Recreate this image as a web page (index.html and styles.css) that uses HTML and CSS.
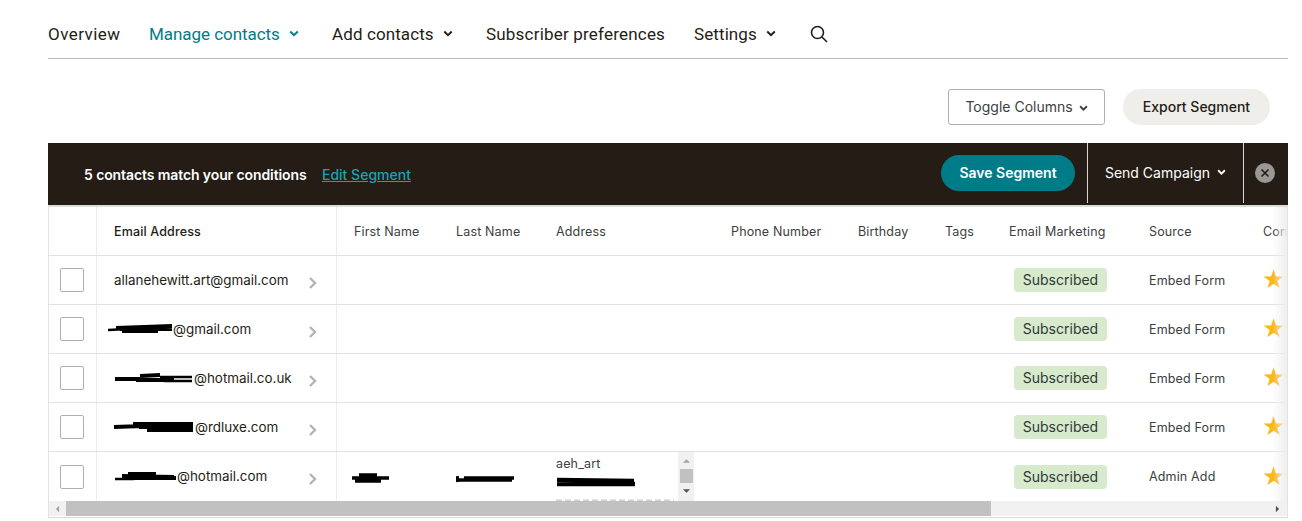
FILE: index.html
```html
<!DOCTYPE html>
<html lang="en">

<head>
    <meta charset="UTF-8">
    <title>Segment</title>
    <link rel="stylesheet" href="styles.css">
</head>

<body>
    <nav class="nav">
        <a class="nav-item overview">Overview</a>
        <a class="nav-item manage active">Manage contacts <svg class="nav-caret" viewBox="0 0 8 6"><path d="M1 1l3 3 3-3"/></svg></a>
        <a class="nav-item add">Add contacts <svg class="nav-caret" viewBox="0 0 8 6"><path d="M1 1l3 3 3-3"/></svg></a>
        <a class="nav-item prefs">Subscriber preferences</a>
        <a class="nav-item settings">Settings <svg class="nav-caret" viewBox="0 0 8 6"><path d="M1 1l3 3 3-3"/></svg></a>
        <svg class="nav-search" viewBox="0 0 18 18"><circle cx="7.5" cy="7.5" r="6"/><path d="M12 12l5 5"/></svg>
    </nav>

    <div class="toolbar">
        <button class="btn-toggle">Toggle Columns <svg class="caret" viewBox="0 0 8 6"><path d="M1 1l3 3 3-3"/></svg></button>
        <button class="btn-export">Export Segment</button>
    </div>

    <div class="segment-bar">
        <span class="match">5 contacts match your conditions</span>
        <a class="edit">Edit Segment</a>
        <button class="btn-save">Save Segment</button>
        <div class="send">Send Campaign <svg class="caret" viewBox="0 0 8 6"><path d="M1 1l3 3 3-3"/></svg></div>
        <div class="close"><svg viewBox="0 0 10 10"><path d="M1.5 1.5l7 7M8.5 1.5l-7 7"/></svg></div>
    </div>

    <div class="table">
        <div class="row head">
            <div class="cell c-check"></div>
            <div class="cell c-email">Email Address</div>
            <div class="cell">First Name</div>
            <div class="cell">Last Name</div>
            <div class="cell">Address</div>
            <div class="cell">Phone Number</div>
            <div class="cell">Birthday</div>
            <div class="cell">Tags</div>
            <div class="cell">Email Marketing</div>
            <div class="cell">Source</div>
            <div class="cell">Contact Rating</div>
        </div>

        <div class="row">
            <div class="cell c-check"><span class="box"></span></div>
            <div class="cell c-email"><span class="mail">allanehewitt.art@gmail.com</span><svg class="go" viewBox="0 0 9 14"><path d="M2 2l5 5-5 5"/></svg></div>
            <div class="cell"></div><div class="cell"></div><div class="cell"></div><div class="cell"></div><div class="cell"></div><div class="cell"></div>
            <div class="cell"><span class="badge">Subscribed</span></div>
            <div class="cell">Embed Form</div>
            <div class="cell"><span class="stars">★★</span></div>
        </div>

        <div class="row">
            <div class="cell c-check"><span class="box"></span></div>
            <div class="cell c-email"><span class="mail pull"><svg class="ink" width="65" height="12" viewBox="0 0 65 12"><path class="thin" d="M0 7L20 6"/><path d="M8 5L64 3M12 6L64 6M14 8L50 8"/></svg>@gmail.com</span><svg class="go" viewBox="0 0 9 14"><path d="M2 2l5 5-5 5"/></svg></div>
            <div class="cell"></div><div class="cell"></div><div class="cell"></div><div class="cell"></div><div class="cell"></div><div class="cell"></div>
            <div class="cell"><span class="badge">Subscribed</span></div>
            <div class="cell">Embed Form</div>
            <div class="cell"><span class="stars">★★</span></div>
        </div>

        <div class="row">
            <div class="cell c-check"><span class="box"></span></div>
            <div class="cell c-email"><span class="mail"><svg class="ink" width="80" height="12" viewBox="0 0 80 12"><path d="M1 7L26 7M26 4L46 3M22 8L60 8"/><path class="thin" d="M46 5L78 5M50 9L78 9"/></svg>@hotmail.co.uk</span><svg class="go" viewBox="0 0 9 14"><path d="M2 2l5 5-5 5"/></svg></div>
            <div class="cell"></div><div class="cell"></div><div class="cell"></div><div class="cell"></div><div class="cell"></div><div class="cell"></div>
            <div class="cell"><span class="badge">Subscribed</span></div>
            <div class="cell">Embed Form</div>
            <div class="cell"><span class="stars">★★</span></div>
        </div>

        <div class="row">
            <div class="cell c-check"><span class="box"></span></div>
            <div class="cell c-email"><span class="mail pull-s"><svg class="ink" width="82" height="12" viewBox="0 0 82 12"><path d="M1 6L30 5M20 3L80 3M26 6L80 6M34 9L80 9"/></svg>@rdluxe.com</span><svg class="go" viewBox="0 0 9 14"><path d="M2 2l5 5-5 5"/></svg></div>
            <div class="cell"></div><div class="cell"></div><div class="cell"></div><div class="cell"></div><div class="cell"></div><div class="cell"></div>
            <div class="cell"><span class="badge">Subscribed</span></div>
            <div class="cell">Embed Form</div>
            <div class="cell"><span class="stars">★★</span></div>
        </div>

        <div class="row last">
            <div class="cell c-check"><span class="box"></span></div>
            <div class="cell c-email"><span class="mail"><svg class="ink" width="63" height="12" viewBox="0 0 63 12"><path class="thin" d="M1 9L20 9"/><path d="M8 6L60 7M14 4L42 4M12 8L62 8"/></svg>@hotmail.com</span><svg class="go" viewBox="0 0 9 14"><path d="M2 2l5 5-5 5"/></svg></div>
            <div class="cell"><svg class="ink-name first" width="40" height="12" viewBox="0 0 40 12"><path d="M1 6L38 6M8 3L26 3M4 9L30 9"/></svg></div>
            <div class="cell"><svg class="ink-name" width="59" height="12" viewBox="0 0 59 12"><path d="M1 4L2 10M2 8L56 8M8 6L58 6"/></svg></div>
            <div class="cell c-address">
                <div class="address-box">
                    <div class="address-text">
                        <div>aeh_art</div>
                        <svg class="ink-address" width="80" height="12" viewBox="0 0 80 12"><path d="M1 3L78 4M1 7L79 7"/></svg>
                        <svg class="address-cut" width="118" height="3" viewBox="0 0 118 3"><path d="M0 1.5H118"/></svg>
                    </div>
                    <div class="address-scroll">
                        <svg class="arrow" viewBox="0 0 10 6"><path class="up-off" d="M5 1l4 4H1z"/></svg>
                        <span class="address-thumb"></span>
                        <svg class="arrow down" viewBox="0 0 10 6"><path d="M1 1h8L5 5z"/></svg>
                    </div>
                </div>
            </div>
            <div class="cell"></div><div class="cell"></div><div class="cell"></div>
            <div class="cell"><span class="badge">Subscribed</span></div>
            <div class="cell">Admin Add</div>
            <div class="cell"><span class="stars">★★</span></div>
        </div>

        <div class="scrollbar">
            <svg class="sb-arrow" viewBox="0 0 6 10"><path d="M5 1v8L1 5z"/></svg>
            <span class="sb-thumb"></span>
            <svg class="sb-arrow right" viewBox="0 0 6 10"><path d="M1 1v8l4-4z"/></svg>
        </div>
        <div class="fade"></div>
    </div>
</body>

</html>
```

FILE: styles.css
```css
* {
    box-sizing: border-box;
}

body {
    margin: 0;
    background-color: #fff;
    color: #241c15;
    font-family: "Inter", "Liberation Sans", sans-serif;
    height: 521px;
    overflow: hidden;
}

/* Top navigation */
.nav {
    margin: 0 14px 0 48px;
    height: 59px;
    padding-top: 10px;
    border-bottom: 1px solid #b9b9b9;
    display: flex;
    align-items: center;
    font-family: "Roboto", sans-serif;
    font-size: 17px;
    letter-spacing: 0.1px;
}

.nav-item {
    white-space: nowrap;
    display: flex;
    align-items: center;
}

.nav-item.active {
    color: #007c89;
}

.overview { width: 101px; letter-spacing: 0.45px; }
.manage { width: 183px; letter-spacing: -0.05px; }
.add { width: 154px; }
.prefs { width: 208px; letter-spacing: 0.2px; }
.settings { width: 116px; }

.nav-caret {
    width: 10px;
    height: 8px;
    margin-left: 9px;
    fill: none;
    stroke: currentColor;
    stroke-width: 1.5;
}

.nav-search {
    width: 18px;
    height: 18px;
    fill: none;
    stroke: #241c15;
    stroke-width: 1.6;
}

/* Buttons above the table */
.toolbar {
    height: 84px;
    padding: 30px 32px 0 0;
    display: flex;
    justify-content: flex-end;
    align-items: flex-start;
    gap: 18px;
}

button {
    font-family: inherit;
    color: inherit;
    cursor: pointer;
    padding: 0 0 2px;
}

.btn-toggle {
    width: 157px;
    height: 36px;
    background: #fff;
    border: 1px solid #b0b0ae;
    border-radius: 3px;
    font-size: 14px;
    color: #3a3f3f;
}

.caret {
    width: 9px;
    height: 7px;
    margin-left: 2px;
    fill: none;
    stroke: currentColor;
    stroke-width: 1.6;
}

.btn-export {
    width: 147px;
    height: 36px;
    background: #efeeea;
    border: 0;
    border-radius: 18px;
    font-size: 14px;
    font-weight: 500;
}

/* Dark segment bar */
.segment-bar {
    margin: 0 14px 0 48px;
    height: 62px;
    background: #241c15;
    color: #fff;
    display: flex;
    align-items: center;
    padding-left: 36px;
    font-size: 14px;
}

.match {
    font-weight: 600;
    width: 238px;
    margin-top: 1px;
    letter-spacing: -0.1px;
}

.edit {
    color: #1aa3b5;
    text-decoration: underline;
    font-weight: 500;
    margin-top: 1px;
}

.btn-save {
    margin-left: auto;
    width: 134px;
    height: 36px;
    margin-top: -2px;
    background: #007c89;
    border: 0;
    border-radius: 18px;
    color: #fff;
    font-size: 14px;
    font-weight: 600;
}

.send {
    margin-left: 12px;
    width: 157px;
    height: 60px;
    align-self: flex-start;
    border-left: 1px solid #d8d8d6;
    border-right: 1px solid #d8d8d6;
    display: flex;
    align-items: center;
    justify-content: center;
    gap: 5px;
    font-size: 14px;
    padding-bottom: 1px;
}

.close {
    width: 20px;
    height: 20px;
    margin: -2px 13px 0 11px;
    border-radius: 50%;
    background: #9b9894;
    display: flex;
    align-items: center;
    justify-content: center;
}

.close svg {
    width: 10px;
    height: 10px;
    fill: none;
    stroke: #241c15;
    stroke-width: 1.6;
}

/* Contacts table */
.table {
    position: relative;
    margin: 0 14px 0 48px;
    height: 313px;
    border-top: 2px solid #dcdcda;
    border-left: 1px solid #e4e4e2;
    border-right: 1px solid #e4e4e2;
    border-bottom: 1px solid #dcdcda;
    overflow: hidden;
}

.row {
    display: grid;
    grid-template-columns: 48px 240px 102px 100px 175px 127px 87px 64px 140px 114px 120px;
    height: 49px;
    width: 1317px;
    border-bottom: 1px solid #e2e2e0;
    font-size: 12.5px;
    letter-spacing: 0.15px;
    color: #3a4040;
}

.row.last {
    border-bottom: 0;
}

.cell {
    padding-left: 17px;
    display: flex;
    align-items: center;
    white-space: nowrap;
    overflow: hidden;
}

.c-check {
    padding-left: 11px;
    border-right: 1px solid #ececea;
}

.c-email {
    border-right: 1px solid #ececea;
    color: #241c15;
    font-weight: 500;
    position: relative;
}

.row:not(.head) .c-email {
    font-weight: 400;
}

.box {
    width: 24px;
    height: 24px;
    border: 1px solid #b0b0ae;
    border-radius: 2px;
    background: #fff;
}

.mail {
    display: flex;
    align-items: center;
    font-size: 13.4px;
    letter-spacing: 0;
    margin-top: -1px;
}

.mail.pull {
    margin-left: -6px;
}

.mail.pull-s {
    margin-left: -1px;
}

.ink {
    fill: none;
    stroke: #000;
    stroke-width: 4;
}

.ink .thin {
    stroke-width: 2.5;
}

.ink-name {
    fill: none;
    stroke: #000;
    stroke-width: 3.5;
    margin-top: 2px;
}

.ink-name.first {
    margin-left: -3px;
}

.go {
    position: absolute;
    left: 211px;
    top: 20px;
    width: 9px;
    height: 14px;
    fill: none;
    stroke: #b4b4b4;
    stroke-width: 2.4;
}

/* Address cell has its own small scroll box */
.c-address {
    align-items: flex-start;
}

.address-box {
    display: flex;
    width: 138px;
    height: 49px;
}

.address-text {
    width: 122px;
    height: 49px;
    overflow: hidden;
    padding-top: 4px;
    line-height: 15px;
}

.ink-address {
    display: block;
    margin-top: 6px;
    fill: none;
    stroke: #000;
    stroke-width: 4.5;
}

.address-cut {
    display: block;
    margin-top: 10px;
    fill: none;
    stroke: #d0d0d0;
    stroke-width: 2;
    stroke-dasharray: 6 3;
}

.address-scroll {
    width: 16px;
    height: 49px;
    background: #f1f1f1;
    display: flex;
    flex-direction: column;
    align-items: center;
    padding-top: 6px;
}

.arrow {
    width: 9px;
    height: 6px;
    fill: #505050;
}

.arrow .up-off {
    fill: #a3a3a3;
}

.address-thumb {
    width: 13px;
    height: 14px;
    margin-top: 5px;
    background: #c1c1c1;
}

.arrow.down {
    margin-top: 5px;
}

.badge {
    margin-left: 5px;
    width: 93px;
    height: 24px;
    padding-bottom: 1px;
    background: #d8eacc;
    border-radius: 4px;
    display: flex;
    align-items: center;
    justify-content: center;
    font-size: 14px;
    letter-spacing: 0;
    color: #2f3838;
}

.stars {
    color: #fbb717;
    font-family: "DejaVu Sans", sans-serif;
    font-size: 26px;
    letter-spacing: -3px;
    margin: -2px 0 0 -1px;
}

/* Bottom scrollbar */
.scrollbar {
    height: 15px;
    background: #f1f1f1;
    display: flex;
    align-items: center;
}

.sb-arrow {
    width: 5px;
    height: 8px;
    margin-left: 6px;
    fill: #a3a3a3;
}

.sb-arrow.right {
    margin-left: 284px;
    fill: #505050;
}

.sb-thumb {
    width: 925px;
    height: 15px;
    margin-left: 6px;
    background: #c1c1c1;
}

/* Soft edge over the last column */
.fade {
    position: absolute;
    right: 0;
    top: 0;
    bottom: 16px;
    width: 18px;
    background: linear-gradient(to right, rgba(240, 240, 240, 0) 20%, #eee);
}
```
